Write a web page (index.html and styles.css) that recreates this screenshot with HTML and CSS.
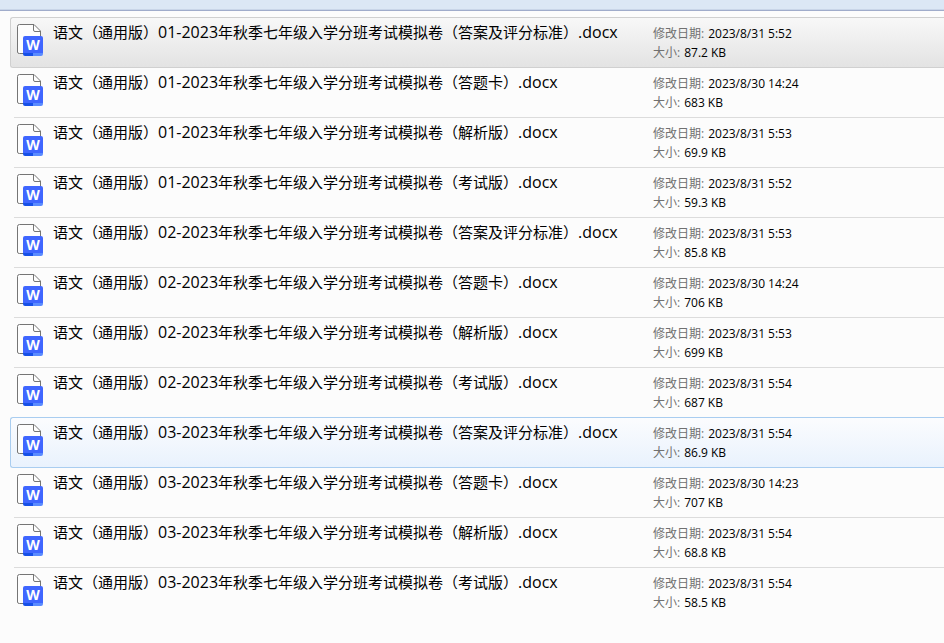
FILE: index.html
```
<!DOCTYPE html>
<html lang="zh-CN">
<head>
<meta charset="utf-8">
<meta name="viewport" content="width=device-width, initial-scale=1">
<title>语文</title>
<link rel="stylesheet" href="styles.css">
</head>
<body>
<header class="toolbar"></header>
<main>
  <ul class="files" id="files"></ul>
</main>
<script src="files.js"></script>
</body>
</html>
```
FILE: styles.css
```
body {
  margin: 0;
  background: #fcfcfc;
  color: #000;
  font-family: "Open Sans", "Noto Sans CJK SC", sans-serif;
}

.letter {
  fill: #fff;
  font: 700 14px "Open Sans", sans-serif;
}

.toolbar {
  height: 11px;
  box-sizing: border-box;
  background: #dce7f5;
  border-bottom: 1px solid #a0accb;
  box-shadow: inset 0 -1px #c9d5e8;
}

.files {
  list-style: none;
  margin: 0;
  padding: 6px 0 0 10px;
}

.file {
  display: grid;
  grid-template-columns: 26px minmax(0, 590px) minmax(0, 1fr);
  column-gap: 10px;
  box-sizing: border-box;
  min-height: 51px;
  margin-bottom: -1px;
  padding: 6px 0 0 6px;
  border: 1px solid transparent;
  border-right: 0;
  background: linear-gradient(#dcdcdc, #dcdcdc) 4px 100% / 100% 1px no-repeat border-box;
}

.file:last-child {
  background: none;
}

.file.selected {
  border-color: #d0d0d0;
  border-radius: 3px 0 0 3px;
  background: linear-gradient(#f8f8f8, #e3e3e3) padding-box;
}

.file.hover {
  border-color: #a9cdf0;
  border-radius: 3px 0 0 3px;
  background: linear-gradient(#fbfcfe, #e9f2fd) padding-box;
}

.icon {
  display: block;
  width: 26px;
  height: 32px;
}

.name {
  color: inherit;
  text-decoration: none;
  font-size: 15px;
  line-height: 16px;
  white-space: nowrap;
}

.latin {
  font-size: 16px;
}

.details {
  margin: 0;
  font-size: 12px;
  line-height: 19px;
}

.details div {
  display: flex;
  gap: 4px;
}

.details dt {
  color: #707070;
}

.details dd {
  margin: 0;
}
```
FILE: files.js
```
const files = [
  ["01", "答案及评分标准", "2023/8/31 5:52", "87.2 KB", "selected"],
  ["01", "答题卡", "2023/8/30 14:24", "683 KB"],
  ["01", "解析版", "2023/8/31 5:53", "69.9 KB"],
  ["01", "考试版", "2023/8/31 5:52", "59.3 KB"],
  ["02", "答案及评分标准", "2023/8/31 5:53", "85.8 KB"],
  ["02", "答题卡", "2023/8/30 14:24", "706 KB"],
  ["02", "解析版", "2023/8/31 5:53", "699 KB"],
  ["02", "考试版", "2023/8/31 5:54", "687 KB"],
  ["03", "答案及评分标准", "2023/8/31 5:54", "86.9 KB", "hover"],
  ["03", "答题卡", "2023/8/30 14:23", "707 KB"],
  ["03", "解析版", "2023/8/31 5:54", "68.8 KB"],
  ["03", "考试版", "2023/8/31 5:54", "58.5 KB"]
];

const icon = `
  <svg class="icon" viewBox="0 0 26 32" aria-hidden="true">
    <path d="M2.5 .5H17L23.5 7V28q0 1.500-1.500 1.500H2.500Q.5 29.500 .5 28V2.500Q.5 .5 2.500 .5Z" fill="#fdfdfd" stroke="#757575"/>
    <path d="M16.500 .5V6q0 1.500 1.500 1.500h5.500" fill="none" stroke="#757575"/>
    <path d="M6 14q0-2 2-2H24q2 0 2 2V29H6Z" fill="#3f66ff"/>
    <path d="M6 29H16V32H8q-2 0-2-2Z" fill="#1650e8"/>
    <path d="M16 29H26V30q0 2-2 2H16Z" fill="#5a8cff"/>
    <text class="letter" x="16" y="26" text-anchor="middle">W</text>
  </svg>`;

document.getElementById("files").innerHTML = files.map(([number, kind, date, size, state = ""]) => `
  <li class="file ${state}">
    ${icon}
    <a class="name" href="#">语文（通用版）<span class="latin">${number}-2023</span>年秋季七年级入学分班考试模拟卷（${kind}）<span class="latin">.docx</span></a>
    <dl class="details">
      <div><dt>修改日期:</dt><dd>${date}</dd></div>
      <div><dt>大小:</dt><dd>${size}</dd></div>
    </dl>
  </li>`).join("");
```
